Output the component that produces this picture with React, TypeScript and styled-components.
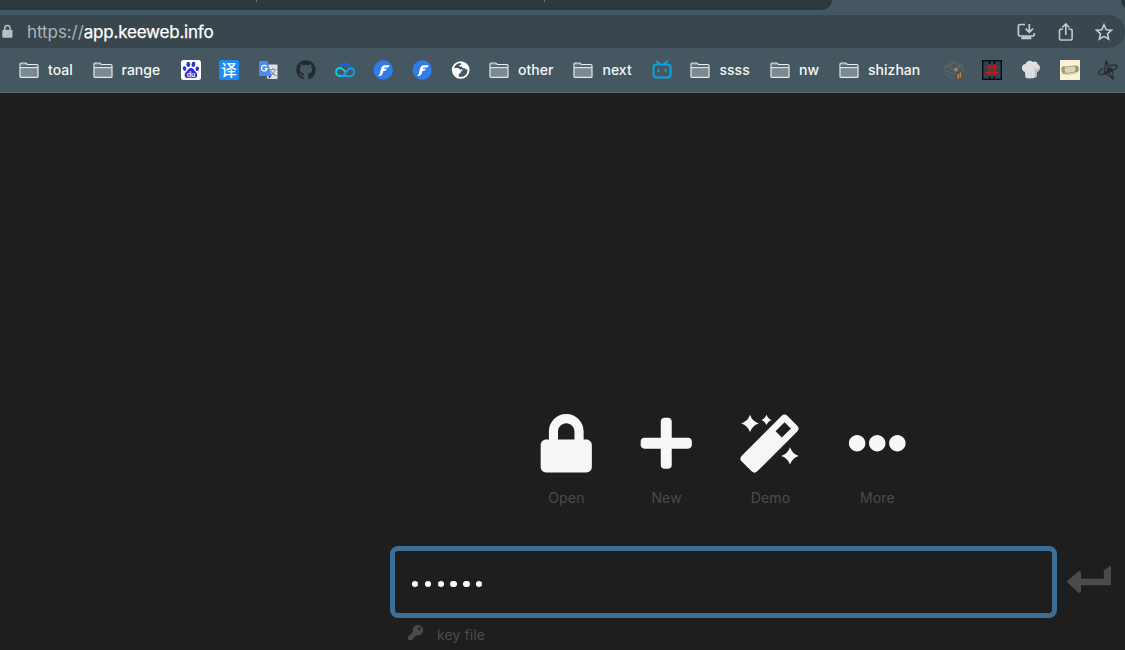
import React from "react";
import styled, { createGlobalStyle } from "styled-components";
import { FaLock, FaPlus, FaEllipsisH, FaKey, FaGithub } from "react-icons/fa";

const GlobalStyle = createGlobalStyle`
  * { box-sizing: border-box; }
  body { margin: 0; background: #1e1e1e; font-family: Inter, "Liberation Sans", sans-serif; }
  svg { display: block; flex: none; overflow: visible; }
`;

const Window = styled.div`
  width: 1125px;
  height: 650px;
  overflow: hidden;
  display: flex;
  flex-direction: column;
  background: #1e1e1e;
`;

const Chrome = styled.header`
  height: 93px;
  flex: none;
  background: #455861;
  border-bottom: 1px solid #5c6970;
`;

const TabStrip = styled.div`
  height: 14.5px;
  display: flex;
  justify-content: space-between;
  align-items: flex-start;
`;

const InactiveTabs = styled.div`
  width: 832px;
  height: 10px;
  display: flex;
  padding-left: 256px;
  gap: 287px;
  background: #2b383d;
  border-bottom-right-radius: 10px;
`;

const TabDivider = styled.i`
  width: 1px;
  height: 2px;
  background: #6c777b;
`;

const TabEdge = styled.div`
  width: 4px;
  height: 7px;
  background: #2b383d;
  border-bottom-left-radius: 4px 7px;
`;

const AddressBar = styled.div`
  height: 33.5px;
  display: flex;
  align-items: center;
  padding: 0 12px 0 2px;
  background: #39464d;
  border-radius: 0 17px 17px 0;
`;

const Url = styled.div`
  flex: 1;
  margin-left: 14px;
  padding-top: 1px;
  font-size: 17px;
  line-height: 34px;
  letter-spacing: -0.2px;
  color: #fff;
  white-space: nowrap;
  -webkit-text-stroke: 0.25px #fff;
`;

const Scheme = styled.span`
  color: #adb4b7;
  letter-spacing: -0.07px;
  -webkit-text-stroke: 0;
`;

const Actions = styled.div`
  display: flex;
  align-items: center;
  gap: 21.3px;

  > svg { margin-top: 1px; }
`;

const Bookmarks = styled.nav`
  height: 44px;
  display: flex;
  align-items: center;
  padding-left: 19px;
`;

const Bookmark = styled.div<{ $w: number }>`
  width: ${(p) => p.$w}px;
  flex: none;
  display: flex;
  align-items: center;
  gap: 9px;
`;

const BookmarkName = styled.span`
  font-size: 14px;
  font-weight: 500;
  line-height: 20px;
  letter-spacing: 0.03px;
  color: #f4f6f7;
  white-space: nowrap;
`;

const Page = styled.main`
  flex: 1;
  display: flex;
  flex-direction: column;
  padding: 321px 0 0 390px;
`;

const ActionRow = styled.div`
  width: 667px;
  display: flex;
  justify-content: center;
  gap: 49px;
`;

const OpenAction = styled.div<{ $w: number }>`
  width: ${(p) => p.$w}px;
  display: flex;
  flex-direction: column;
  align-items: center;
  color: #f7f7f7;
`;

const ActionLabel = styled.span`
  margin-top: 14px;
  font-size: 14px;
  line-height: 22px;
  letter-spacing: 0.15px;
  color: #4b4b4b;
`;

const PasswordRow = styled.div`
  display: flex;
  align-items: flex-start;
  gap: 10px;
  margin-top: 37px;

  > svg { margin-top: 20px; }
`;

const PasswordField = styled.div`
  width: 667px;
  height: 72px;
  display: flex;
  align-items: center;
  gap: 6.4px;
  padding: 5px 0 0 17px;
  border: 5px solid #3c6e96;
  border-radius: 8px;
`;

const Dot = styled.i`
  width: 6.4px;
  height: 6.4px;
  border-radius: 50%;
  background: #fff;
`;

const KeyFile = styled.div`
  display: flex;
  align-items: center;
  gap: 14px;
  margin: 6px 0 0 18px;
  font-size: 14px;
  line-height: 22px;
  letter-spacing: 0.1px;
  color: #4b4b4b;

  > svg { margin-bottom: 5px; }
`;

const Folder = () => (
  <svg width="20" height="17" viewBox="0 0 20 17">
    <path d="M1 14.500V2.200Q1 1 2.200 1h4.200q.7 0 1.200.6l.9.9h9.300q1.200 0 1.200 1.200v10.800q0 .9-.9.9H1.900Q1 15.400 1 14.500Z" fill="#7b8990" stroke="#e7eaeb" strokeWidth="1.200" />
    <path d="M1.600 3.200h5.800l1 .1h9.800v1.800H1.600z" fill="#53656e" />
    <path d="M1 5.600h18" stroke="#e7eaeb" strokeWidth="1.100" />
  </svg>
);

const Baidu = () => (
  <svg width="20" height="20" viewBox="0 0 20 20">
    <rect width="20" height="20" rx="2.500" fill="#fff" />
    <g fill="#2b2fe0">
      <ellipse cx="7.300" cy="4.400" rx="1.900" ry="2.600" />
      <ellipse cx="12.400" cy="4.400" rx="1.900" ry="2.600" transform="rotate(8 12.400 4.400)" />
      <ellipse cx="3.600" cy="8.500" rx="1.800" ry="2.300" transform="rotate(-12 3.600 8.500)" />
      <ellipse cx="16.300" cy="8.800" rx="1.800" ry="2.300" transform="rotate(8 16.300 8.800)" />
      <path d="M10 8c2.400 0 2.800 2.200 4.600 3.700 2.500 2.100 2.200 6.300-1 6.300-1.500 0-2.200-.3-3.600-.3s-2.200.3-3.700.3c-3.200 0-3.500-4.200-1-6.300C7.200 10.200 7.600 8 10 8Z" />
    </g>
    <text x="10" y="16.600" textAnchor="middle" fontSize="7" fontWeight="600" fill="#fff" fontFamily="Inter, sans-serif">du</text>
  </svg>
);

const Translate = () => (
  <svg width="20" height="20" viewBox="0 0 20 20">
    <rect width="20" height="20" rx="2.500" fill="#1c8bf8" />
    <text x="10" y="15.500" textAnchor="middle" fontSize="15.500" fontWeight="500" fill="#fff" fontFamily='"Noto Sans CJK SC", sans-serif'>译</text>
  </svg>
);

const GoogleTranslate = () => (
  <svg width="20" height="20" viewBox="0 0 20 20">
    <rect x="9" y="4.500" width="10.500" height="14.500" rx="1" fill="#dfe1e2" />
    <text x="14.800" y="15" textAnchor="middle" fontSize="8.500" fill="#65747b" fontFamily='"Noto Sans CJK SC", sans-serif'>文</text>
    <path d="M10.500 16h3l-2.800 3.200z" fill="#3348b5" />
    <path d="M2 1h7.400l4.300 15H2Q1 16 1 15V2q0-1 1-1Z" fill="#4c8bf5" />
    <path d="M8.600 6.600A2.800 2.800 0 1 0 9.100 8.700H6.600" fill="none" stroke="#fff" strokeWidth="1.200" />
  </svg>
);

const Cloud = () => (
  <svg width="20" height="20" viewBox="0 0 20 20" fill="none" strokeWidth="1.900" strokeLinecap="round">
    <path d="M4.700 8.200C5.200 2.400 14 2.400 15.300 8" stroke="#1767ee" />
    <path d="M10.300 11.600C7.800 8.900 6.800 8 5.100 8c-5.300.2-5.300 8 0 8h2" stroke="#10cfd4" />
    <path d="M7 16c2 0 3-2.700 5.300-5.300 1.400-1.700 2-2.500 3.500-2.500 4.400.2 4.300 7.600 0 7.800H7.300" stroke="#159cf0" />
  </svg>
);

const FBadge = () => (
  <svg width="20" height="20" viewBox="0 0 20 20">
    <circle cx="10.200" cy="10" r="9.700" fill="#2f7de9" />
    <path d="M4.700 15.800c2-.1 2-2 2.700-4.500.8-3.500 1.400-5.800 4.100-6.100 2-.2 3.200.4 5.200-.3-.5 2.200-1.300 2.800-3 2.700-1.500-.1-2.400-.2-2.800 1.200h2.900c-.4 1.700-1.300 2.200-3.400 2.200-.7 3-1.400 4.900-3.400 4.900Z" fill="#fff" />
  </svg>
);

const Globe = () => (
  <svg width="20" height="20" viewBox="0 0 20 20">
    <circle cx="9.700" cy="10" r="7.900" fill="#435660" stroke="#fff" strokeWidth="1.900" />
    <path d="M2 8h5.200l2 1.500h2.200v1.800H9.800l-.3 2.200H7.800v3.400l2.200 1C4.600 18 1 14 2 8ZM9.500 2.500c4 0 7.300 2.500 8 7h-2.700l-.9-1.300h-2.100l-.9-1.600H8.400V4.900h1.800Z" fill="#fff" />
  </svg>
);

const Television = () => (
  <svg width="20" height="20" viewBox="0 0 20 20" fill="none" stroke="#08a5e1" strokeWidth="2" strokeLinecap="round">
    <rect x="1.500" y="4.500" width="17" height="13" rx="3" />
    <path d="M5 1.400 7.500 4M15 1.400 12.500 4M6.500 9.800v1.200M13.500 9.800v1.200" />
  </svg>
);

const CubeTile = () => (
  <svg width="20" height="20" viewBox="0 0 20 20" fill="none">
    <path d="m1 6 9-5 9 5-9 5zM1 6v8l9 5M19 6v6M4 6l6-3 6 3-6 3zM1 10l9 5M4 11l6 4" stroke="#636b6c" strokeWidth=".8" />
    <path d="M9.800 9 12 7.800l2.200 2.600-1.700.8z" fill="#de7f25" />
    <path d="M13.500 14.500v4.500l1.600-.8v-4.600ZM15.800 13v4.800l1.200-.7v-4.800Z" fill="#db812d" />
    <path d="M10 9.500v2.200l2 1.200V11Z" fill="#397a98" />
  </svg>
);

const HashTile = () => (
  <svg width="20" height="20" viewBox="0 0 20 20" fill="none">
    <rect x=".7" y=".7" width="18.600" height="18.600" fill="#34434b" stroke="#080b0d" strokeWidth="1.400" />
    <path d="M7.500 1v3M12.500 1v3M7.500 16v3M12.500 16v3" stroke="#080b0d" strokeWidth="1.500" />
    <path d="M7.500 4v12M12.500 4v12M4 7.200h12M4 12.800h12" stroke="#dc1016" strokeWidth="1.500" />
  </svg>
);

const ChefHat = () => (
  <svg width="20" height="20" viewBox="0 0 20 20">
    <path d="M4.500 17.700 4 12C-.5 10.500.2 4.200 4.500 4 6 .3 10 .2 11.500 2c3-1.500 5 .2 5.100 2.300 3.500 1 3.200 6.800-.8 7.700l-.4 5c-3 1.600-7.700 1.900-10.900.7Z" fill="#dedfdf" />
    <path d="M13 6c1 3 .5 8 .5 11.500l1.900-.5.4-5c2-.6 3.200-2.500 2.800-4.700L15 9Z" fill="#c0c3c4" />
    <path d="M7 12.500v4.500M10.300 12.500v5" stroke="#cdcfd0" />
  </svg>
);

const RollTile = () => (
  <svg width="20" height="20" viewBox="0 0 20 20">
    <path d="M0 0h20v20H0z" fill="#fdf1d5" />
    <path d="M1.500 8C2 5.700 4 6 5.500 6.600L15 5.500c2.500-.5 4 .8 4 3.200s-1.300 4-3.400 3.500L6 14c-3 .5-5-1.500-4.500-6Z" fill="#97a065" />
    <path d="M5 7.500 14.500 6.300q2 2.500 0 5.500L5.500 13q-1.800-2.500-.5-5.500Z" fill="#d6d6be" />
    <path d="M2.500 13.600q7 2 15-1.200" stroke="#c9b98f" fill="none" />
  </svg>
);

const Spindle = () => (
  <svg width="20" height="20" viewBox="0 0 20 20" fill="none" stroke="#292b2d" strokeLinejoin="round">
    <path d="M8 .8 6.200 12.500l9.300 6.700-1.200-9ZM8 .8l2.300 10.700 5.200 7.700M6.200 12.500l4.100-1 4-1.300" strokeWidth="1.100" />
    <path d="M5 8.500C2 10.200.3 12.300.8 13.600c.7 1.500 5 .9 10-1.200s9-5.200 8.200-6.700c-.6-1.200-3.600-1-6.500-.2" strokeWidth="1.300" />
    <path d="m9.500 8 5 2-6 2.500Z" fill="#292b2d" />
  </svg>
);

const Install = () => (
  <svg width="19" height="18" viewBox="0 0 19 18" fill="none" stroke="#c5cacc" strokeWidth="1.700">
    <path d="M8 1.500H3Q1.400 1.500 1.400 3v8.400Q1.400 13 3 13h12.500q1.800 0 1.800-1.700V10M12.300 1v8M8.600 5.700l3.700 3.700L16 5.700" />
    <path d="M4.300 14.800h10" strokeWidth="3" />
  </svg>
);

const Share = () => (
  <svg width="16" height="20" viewBox="0 0 16 20" fill="none" stroke="#c5cacc" strokeWidth="1.600">
    <path d="M5 7.200H2.700Q1.500 7.200 1.500 8.400v8.400Q1.500 18 2.700 18h10.200q1.200 0 1.200-1.200V8.400q0-1.200-1.200-1.200h-2.300M7.800 13V2.200M4.300 5.500l3.500-3.500 3.500 3.500" />
  </svg>
);

const Star = () => (
  <svg width="18" height="18" viewBox="0 0 18 18" fill="none" stroke="#c5cacc" strokeWidth="1.600">
    <path d="m9 1.700 2.200 5 5.300.5-4 3.600 1.200 5.400L9 13.400l-4.700 2.800 1.200-5.400-4-3.600 5.300-.5Z" />
  </svg>
);

const Wand = () => (
  <svg width="58.500" height="58.500" viewBox="0 0 58.500 58.500" fill="currentColor">
    <path fillRule="evenodd" transform="rotate(-45 29.200 29.250)" d="M.2 18h56.500a4 4 0 0 1 4 4v14a4 4 0 0 1-4 4H.2a4 4 0 0 1-4-4V22a4 4 0 0 1 4-4ZM41.500 24.500v9h12.700v-9Z" />
    <path d="M9 .7q2.200 6.500 8.700 8.700-6.500 2.200-8.700 8.700Q6.800 11.600.3 9.400 6.800 7.200 9 .7ZM25.500.7q1.300 3.900 5.200 5.200-3.900 1.300-5.200 5.200-1.300-3.900-5.200-5.200 3.900-1.300 5.200-5.200ZM49 33.200q2.200 6.500 8.700 8.700-6.500 2.200-8.700 8.700-2.200-6.500-8.700-8.700 6.500-2.200 8.700-8.700Z" />
  </svg>
);

const EnterArrow = () => (
  <svg width="44" height="27" viewBox="0 0 44 27">
    <path d="M.4 14.800 11.300 5.500Q13.500 4.300 14 6.500v6.200h22.800V5q0-.7.5-1.100L42.600.2q1.400-.5 1.400.8v17.200q0 1.100-1.100 1.100H14v6.200q-.5 2-2.700.9L.4 16.500q-.7-.8 0-1.700Z" fill="#4b4b4b" />
  </svg>
);

interface BookmarkItem {
  w: number;
  name?: string;
  icon?: React.ReactNode;
}

const bookmarks: BookmarkItem[] = [
  { w: 73.5, name: "toal" },
  { w: 88, name: "range" },
  { w: 38.6, icon: <Baidu /> },
  { w: 38.6, icon: <Translate /> },
  { w: 38.6, icon: <GoogleTranslate /> },
  { w: 38.6, icon: <FaGithub size={20} color="#242b30" /> },
  { w: 38.6, icon: <Cloud /> },
  { w: 38.6, icon: <FBadge /> },
  { w: 38.6, icon: <FBadge /> },
  { w: 38.3, icon: <Globe /> },
  { w: 84.5, name: "other" },
  { w: 78.5, name: "next" },
  { w: 38.5, icon: <Television /> },
  { w: 79.5, name: "ssss" },
  { w: 69, name: "nw" },
  { w: 105, name: "shizhan" },
  { w: 38.4, icon: <CubeTile /> },
  { w: 38.6, icon: <HashTile /> },
  { w: 38.6, icon: <ChefHat /> },
  { w: 38.6, icon: <RollTile /> },
  { w: 20, icon: <Spindle /> },
];

const actions = [
  { w: 51.2, label: "Open", icon: <FaLock size={58.5} /> },
  { w: 51.2, label: "New", icon: <FaPlus size={58.5} /> },
  { w: 58.5, label: "Demo", icon: <Wand /> },
  { w: 57.5, label: "More", icon: <FaEllipsisH size={58.5} /> },
];

export default function App() {
  return (
    <Window>
      <GlobalStyle />
      <Chrome>
        <TabStrip>
          <InactiveTabs>
            <TabDivider />
            <TabDivider />
          </InactiveTabs>
          <TabEdge />
        </TabStrip>
        <AddressBar>
          <svg width="11" height="14" viewBox="0 0 11 14">
            <path d="M2.700 6.500V4.200a2.700 2.700 0 0 1 5.400 0v2.300" fill="none" stroke="#b9bfc2" strokeWidth="1.500" />
            <rect x=".3" y="5.800" width="10.200" height="8" rx="1.200" fill="#b9bfc2" />
          </svg>
          <Url>
            <Scheme>https://</Scheme>app.keeweb.info
          </Url>
          <Actions>
            <Install />
            <Share />
            <Star />
          </Actions>
        </AddressBar>
        <Bookmarks>
          {bookmarks.map((b, i) => (
            <Bookmark key={i} $w={b.w}>
              {b.icon ?? <Folder />}
              {b.name && <BookmarkName>{b.name}</BookmarkName>}
            </Bookmark>
          ))}
        </Bookmarks>
      </Chrome>
      <Page>
        <ActionRow>
          {actions.map((a) => (
            <OpenAction key={a.label} $w={a.w}>
              {a.icon}
              <ActionLabel>{a.label}</ActionLabel>
            </OpenAction>
          ))}
        </ActionRow>
        <PasswordRow>
          <PasswordField>
            {Array.from({ length: 6 }, (_, i) => (
              <Dot key={i} />
            ))}
          </PasswordField>
          <EnterArrow />
        </PasswordRow>
        <KeyFile>
          <FaKey size={15} />
          <span>key file</span>
        </KeyFile>
      </Page>
    </Window>
  );
}
